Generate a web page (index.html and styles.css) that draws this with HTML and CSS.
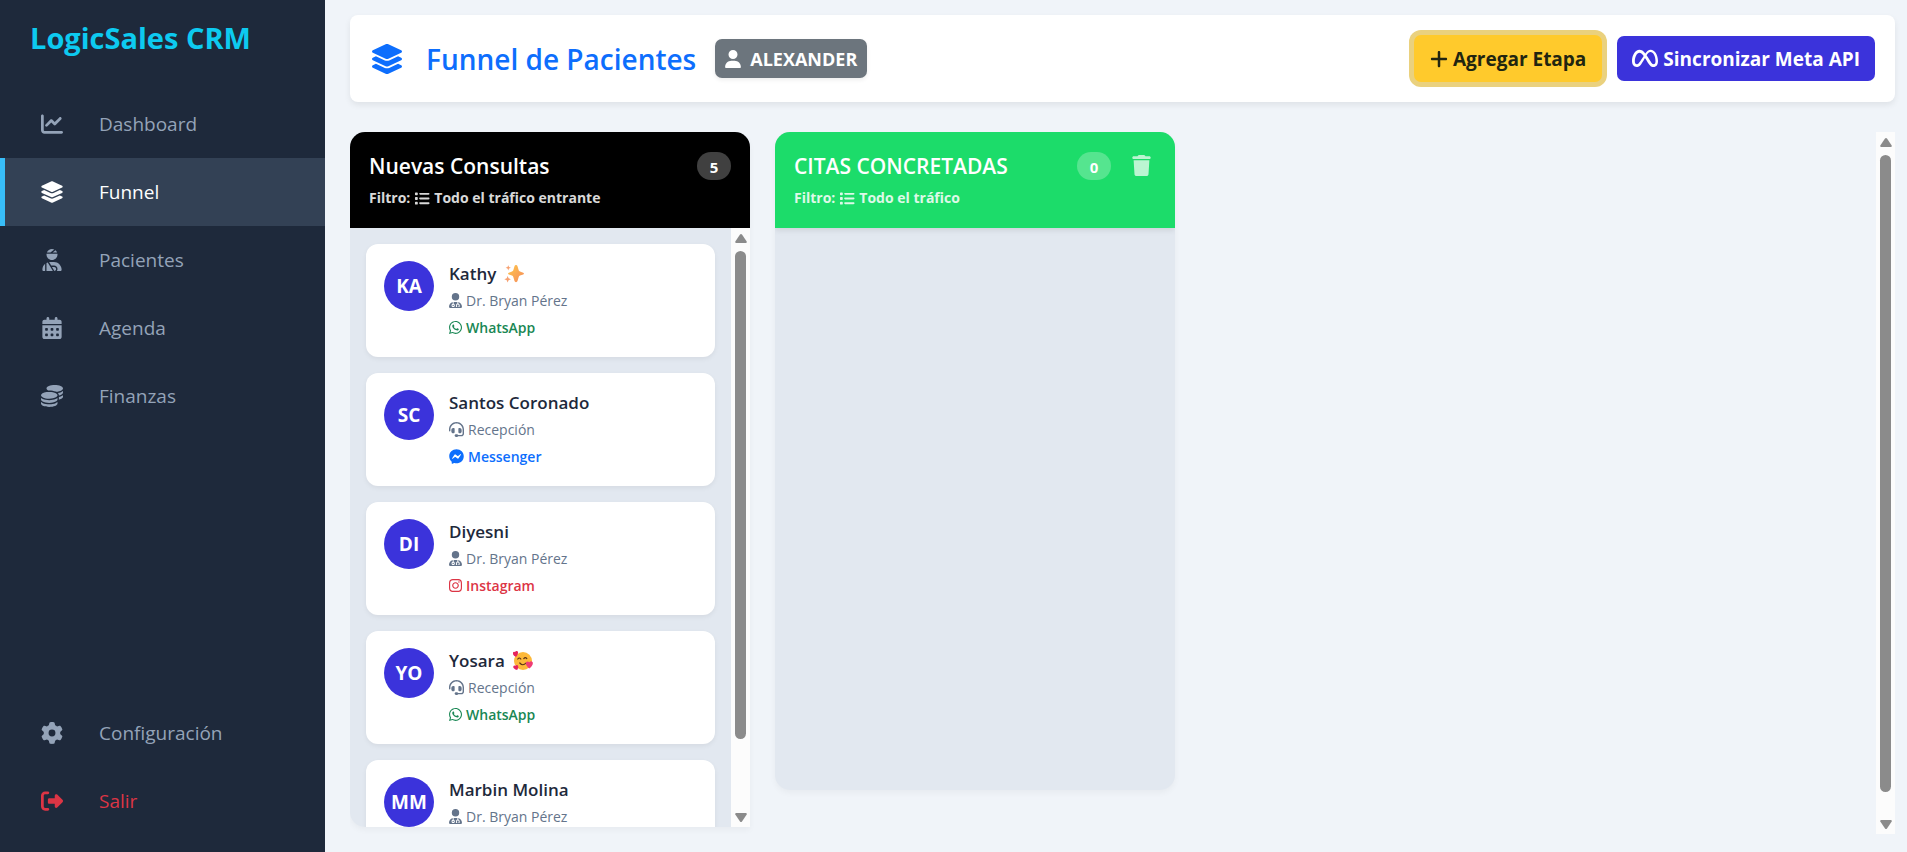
FILE: index.html
```html
<!DOCTYPE html>
<html lang="es">
<head>
<meta charset="utf-8">
<meta name="viewport" content="width=device-width, initial-scale=1">
<title>LogicSales CRM - Funnel de Pacientes</title>
<link rel="stylesheet" href="styles.css">
</head>
<body>
<!-- iconos -->
<svg class="sprite" aria-hidden="true">
	<symbol id="i-chart" viewBox="0 0 512 512"><path d="M64 64c0-17.7-14.3-32-32-32S0 46.3 0 64V400c0 44.2 35.8 80 80 80H480c17.7 0 32-14.3 32-32s-14.3-32-32-32H80c-8.8 0-16-7.2-16-16V64zm406.6 86.6c12.5-12.5 12.5-32.8 0-45.3s-32.8-12.5-45.3 0L320 210.7l-57.4-57.4c-12.5-12.5-32.8-12.5-45.3 0l-112 112c-12.5 12.5-12.5 32.8 0 45.3s32.8 12.5 45.3 0L240 221.3l57.4 57.4c12.5 12.5 32.8 12.5 45.3 0l128-128z"/></symbol>
	<symbol id="i-layers" viewBox="0 0 576 512"><path d="M264.5 5.2c14.9-6.9 32.1-6.9 47 0l218.6 101c8.5 3.9 13.9 12.4 13.9 21.8s-5.4 17.9-13.9 21.8l-218.6 101c-14.9 6.9-32.1 6.9-47 0L45.9 149.8C37.4 145.8 32 137.3 32 128s5.4-17.9 13.9-21.8L264.5 5.2zM476.9 209.6l53.2 24.6c8.5 3.9 13.9 12.4 13.9 21.8s-5.4 17.9-13.9 21.8l-218.6 101c-14.9 6.9-32.1 6.9-47 0L45.9 277.8C37.4 273.8 32 265.3 32 256s5.4-17.9 13.9-21.8l53.2-24.6 152 70.2c23.4 10.8 50.4 10.8 73.8 0l152-70.2zm-152 198.2l152-70.2 53.2 24.6c8.5 3.9 13.9 12.4 13.9 21.8s-5.4 17.9-13.9 21.8l-218.6 101c-14.9 6.9-32.1 6.9-47 0L45.9 405.8C37.4 401.8 32 393.3 32 384s5.4-17.9 13.9-21.8l53.2-24.6 152 70.2c23.4 10.8 50.4 10.8 73.8 0z"/></symbol>
	<symbol id="i-injured" viewBox="0 0 448 512"><path d="M240 80H342.7c-7.9-19.5-20.4-36.5-36.2-49.9L240 80zm37.7-68.2C261.3 4.2 243.2 0 224 0c-53.7 0-99.3 33.1-118.7 80h81.4l91-68.2zM224 256c70.7 0 128-57.3 128-128c0-5.4-.3-10.8-1-16H97c-.7 5.2-1 10.6-1 16c0 70.7 57.3 128 128 128zM124 312.4c-9.7 3.1-19.1 7-28 11.7V512H243.7L181.5 408.2 124 312.4zm33-7.2L204.3 384H272c44.2 0 80 35.8 80 80c0 18-6 34.6-16 48h82.3c16.4 0 29.7-13.3 29.7-29.7C448 383.8 368.2 304 269.7 304H178.3c-7.2 0-14.3 .4-21.3 1.3zM0 482.3C0 498.7 13.3 512 29.7 512H64V345.4C24.9 378.1 0 427.3 0 482.3zM320 464c0-26.5-21.5-48-48-48H223.5l57.1 95.2C303 507.2 320 487.6 320 464z"/></symbol>
	<symbol id="i-calendar" viewBox="0 0 448 512"><path d="M128 0c17.7 0 32 14.3 32 32V64H288V32c0-17.7 14.3-32 32-32s32 14.3 32 32V64h48c26.5 0 48 21.5 48 48v48H0V112C0 85.5 21.5 64 48 64H96V32c0-17.7 14.3-32 32-32zM0 192H448V464c0 26.5-21.5 48-48 48H48c-26.5 0-48-21.5-48-48V192zm64 80v32c0 8.8 7.2 16 16 16h32c8.8 0 16-7.2 16-16V272c0-8.8-7.2-16-16-16H80c-8.8 0-16 7.2-16 16zm128 0v32c0 8.8 7.2 16 16 16h32c8.8 0 16-7.2 16-16V272c0-8.8-7.2-16-16-16H208c-8.8 0-16 7.2-16 16zm144-16c-8.8 0-16 7.2-16 16v32c0 8.8 7.2 16 16 16h32c8.8 0 16-7.2 16-16V272c0-8.8-7.2-16-16-16H336zM64 400v32c0 8.8 7.2 16 16 16h32c8.8 0 16-7.2 16-16V400c0-8.8-7.2-16-16-16H80c-8.8 0-16 7.2-16 16zm144-16c-8.8 0-16 7.2-16 16v32c0 8.8 7.2 16 16 16h32c8.8 0 16-7.2 16-16V400c0-8.8-7.2-16-16-16H208zm112 16v32c0 8.8 7.2 16 16 16h32c8.8 0 16-7.2 16-16V400c0-8.8-7.2-16-16-16H336c-8.8 0-16 7.2-16 16z"/></symbol>
	<symbol id="i-coins" viewBox="0 0 512 512"><path d="M512 80c0 18-14.3 34.6-38.4 48c-29.1 16.1-72.5 27.5-122.3 30.9c-3.7-1.8-7.4-3.5-11.3-5C300.6 137.4 248.2 128 192 128c-8.3 0-16.4 .2-24.5 .6l-1.1-.6C142.3 114.6 128 98 128 80c0-44.2 86-80 192-80S512 35.8 512 80zM160.7 161.1c10.2-.7 20.7-1.1 31.3-1.1c62.2 0 117.4 12.3 152.5 31.4C369.3 204.9 384 221.7 384 240c0 4-.7 7.9-2.1 11.7c-4.6 13.2-17 25.3-35 35.5c-.4 .2-.9 .5-1.3 .7c-35 19.4-90.8 32-153.6 32c-59.6 0-112.9-11.3-148.2-29.1c-1.9-.9-3.7-1.9-5.5-2.9C14.3 274.6 0 258 0 240c0-34.8 53.4-64.5 128-75.4c10.5-1.5 21.4-2.7 32.7-3.5zM416 240c0-21.9-10.6-39.9-24.1-53.4c28.3-4.4 54.2-11.4 76.2-20.5c16.3-6.8 31.5-15.2 43.9-25.5V176c0 19.3-16.5 37.1-43.8 50.9c-14.6 7.4-32.4 13.7-52.4 18.5c.1-1.8 .2-3.5 .2-5.3zm-32 96c0 18-14.3 34.6-38.4 48c-1.8 1-3.6 1.9-5.5 2.9C304.9 404.7 251.6 416 192 416c-62.8 0-118.6-12.6-153.6-32C14.3 370.6 0 354 0 336V300.6c12.5 10.3 27.6 18.7 43.9 25.5C83.4 342.6 135.8 352 192 352s108.6-9.4 148.1-25.9c16.3-6.8 31.5-15.2 43.9-25.5V336zm32 0V278.1c19-4.2 36.5-9.5 52.1-16c16.3-6.8 31.5-15.2 43.9-25.5V272c0 10.5-5 21-14.9 30.9c-16.3 16.3-45 29.7-81.3 38.4c.1-1.7 .2-3.5 .2-5.3zM192 448c56.2 0 108.6-9.4 148.1-25.9c16.3-6.8 31.5-15.2 43.9-25.5V432c0 44.2-86 80-192 80S0 476.2 0 432V396.6c12.5 10.3 27.6 18.7 43.9 25.5C83.4 438.6 135.8 448 192 448z"/></symbol>
	<symbol id="i-gear" viewBox="0 0 512 512"><path d="M495.9 166.6c3.2 8.7 .5 18.4-6.4 24.6l-43.3 39.4c1.1 8.3 1.7 16.8 1.7 25.4s-.6 17.1-1.7 25.4l43.3 39.4c6.9 6.2 9.6 15.9 6.4 24.6c-4.4 11.9-9.7 23.3-15.8 34.3l-4.7 8.1c-6.6 11-14 21.4-22.1 31.2c-5.9 7.2-15.7 9.6-24.5 6.8l-55.7-17.7c-13.4 10.3-28.2 18.9-44 25.4l-12.5 57.1c-2 9.1-9 16.3-18.2 17.8c-13.8 2.3-28 3.5-42.5 3.5s-28.7-1.2-42.5-3.5c-9.2-1.5-16.2-8.7-18.2-17.8l-12.5-57.1c-15.8-6.5-30.6-15.1-44-25.4L83.1 425.9c-8.8 2.8-18.6 .3-24.5-6.8c-8.1-9.8-15.5-20.2-22.1-31.2l-4.7-8.1c-6.1-11-11.4-22.4-15.8-34.3c-3.2-8.7-.5-18.4 6.4-24.6l43.3-39.4C64.6 273.1 64 264.6 64 256s.6-17.1 1.7-25.4L22.4 191.2c-6.9-6.2-9.6-15.9-6.4-24.6c4.4-11.9 9.7-23.3 15.8-34.3l4.7-8.1c6.6-11 14-21.4 22.1-31.2c5.9-7.2 15.7-9.6 24.5-6.8l55.7 17.7c13.4-10.3 28.2-18.9 44-25.4l12.5-57.1c2-9.1 9-16.3 18.2-17.8C227.3 1.2 241.5 0 256 0s28.7 1.2 42.5 3.5c9.2 1.5 16.2 8.7 18.2 17.8l12.5 57.1c15.8 6.5 30.6 15.1 44 25.4l55.7-17.7c8.8-2.8 18.6-.3 24.5 6.8c8.1 9.8 15.5 20.2 22.1 31.2l4.7 8.1c6.1 11 11.4 22.4 15.8 34.3zM256 336a80 80 0 1 0 0-160 80 80 0 1 0 0 160z"/></symbol>
	<symbol id="i-exit" viewBox="0 0 512 512"><path d="M377.9 105.9L500.7 228.7c7.2 7.2 11.3 17.1 11.3 27.3s-4.1 20.1-11.3 27.3L377.9 406.1c-6.4 6.4-15 9.9-24 9.9c-18.7 0-33.9-15.2-33.9-33.9l0-62.1-128 0c-17.7 0-32-14.3-32-32l0-64c0-17.7 14.3-32 32-32l128 0 0-62.1c0-18.7 15.2-33.9 33.9-33.9c9 0 17.6 3.6 24 9.9zM160 96L96 96c-17.7 0-32 14.3-32 32l0 256c0 17.7 14.3 32 32 32l64 0c17.7 0 32 14.3 32 32s-14.3 32-32 32l-64 0c-53 0-96-43-96-96L0 128C0 75 43 32 96 32l64 0c17.7 0 32 14.3 32 32s-14.3 32-32 32z"/></symbol>
	<symbol id="i-user" viewBox="0 0 448 512"><path d="M224 256A128 128 0 1 0 224 0a128 128 0 1 0 0 256zm-45.7 48C79.8 304 0 383.8 0 482.3C0 498.7 13.3 512 29.7 512H418.3c16.4 0 29.7-13.3 29.7-29.7C448 383.8 368.2 304 269.7 304H178.3z"/></symbol>
	<symbol id="i-plus" viewBox="0 0 448 512"><path d="M256 80c0-17.7-14.3-32-32-32s-32 14.3-32 32V224H48c-17.7 0-32 14.3-32 32s14.3 32 32 32H192V432c0 17.7 14.3 32 32 32s32-14.3 32-32V288H400c17.7 0 32-14.3 32-32s-14.3-32-32-32H256V80z"/></symbol>
	<symbol id="i-meta" viewBox="0 0 640 512"><path d="M640 317.9C640 409.2 600.6 466.4 529.7 466.4C467.1 466.4 433.9 431.8 372.8 329.8L341.4 277.2C333.1 264.7 326.9 253 320.2 242.2C300.1 276 273.1 325.2 273.1 325.2C206.1 441.8 168.5 466.4 116.2 466.4C43.4 466.4 0 409.1 0 320.5C0 177.5 79.8 42.4 183.9 42.4C234.1 42.4 277.7 67.1 328.7 131.9C365.8 81.8 406.8 42.4 459.3 42.4C558.4 42.4 640 168.1 640 317.9zM287.4 192.2C244.5 130.1 216.5 111.7 183 111.7C121.1 111.7 69.2 217.8 69.2 321.7C69.2 370.2 87.7 397.4 118.8 397.4C149 397.4 167.8 378.4 222 293.6C222 293.6 246.7 254.5 287.4 192.2zM531.2 397.4C563.4 397.4 578.1 369.9 578.1 322.5C578.1 198.3 523.8 97.1 454.9 97.1C421.7 97.1 393.8 123 360 175.1C369.4 188.9 379.1 204.1 389.3 220.5L426.8 282.9C485.5 377 500.3 397.4 531.2 397.4z"/></symbol>
	<symbol id="i-list" viewBox="0 0 512 512"><path d="M40 48C26.7 48 16 58.7 16 72v48c0 13.3 10.7 24 24 24H88c13.3 0 24-10.7 24-24V72c0-13.3-10.7-24-24-24H40zM192 64c-17.7 0-32 14.3-32 32s14.3 32 32 32H480c17.7 0 32-14.3 32-32s-14.3-32-32-32H192zm0 160c-17.7 0-32 14.3-32 32s14.3 32 32 32H480c17.7 0 32-14.3 32-32s-14.3-32-32-32H192zm0 160c-17.7 0-32 14.3-32 32s14.3 32 32 32H480c17.7 0 32-14.3 32-32s-14.3-32-32-32H192zM16 232v48c0 13.3 10.7 24 24 24H88c13.3 0 24-10.7 24-24V232c0-13.3-10.7-24-24-24H40c-13.3 0-24 10.7-24 24zM40 368c-13.3 0-24 10.7-24 24v48c0 13.3 10.7 24 24 24H88c13.3 0 24-10.7 24-24V392c0-13.3-10.7-24-24-24H40z"/></symbol>
	<symbol id="i-trash" viewBox="0 0 448 512"><path d="M135.2 17.7L128 32H32C14.3 32 0 46.3 0 64S14.3 96 32 96H416c17.7 0 32-14.3 32-32s-14.3-32-32-32H320l-7.2-14.3C307.4 6.8 296.3 0 284.2 0H163.8c-12.1 0-23.2 6.8-28.6 17.7zM416 128H32L53.2 467c1.6 25.3 22.6 45 47.9 45H346.9c25.3 0 46.3-19.7 47.9-45L416 128z"/></symbol>
	<symbol id="i-doctor" viewBox="0 0 448 512"><path d="M224 256A128 128 0 1 0 224 0a128 128 0 1 0 0 256zm-96 55.2C54 332.9 0 401.3 0 482.3C0 498.7 13.3 512 29.7 512H418.3c16.4 0 29.7-13.3 29.7-29.7c0-81-54-149.4-128-171.1V362c27.6 7.1 48 32.2 48 62v40c0 8.8-7.2 16-16 16H336c-8.8 0-16-7.2-16-16s7.2-16 16-16V424c0-17.7-14.3-32-32-32s-32 14.3-32 32v24c8.8 0 16 7.2 16 16s-7.2 16-16 16H256c-8.8 0-16-7.2-16-16V424c0-29.8 20.4-54.9 48-62V304.9c-6-.6-12.1-.9-18.3-.9H178.3c-6.2 0-12.3 .3-18.3 .9v65.4c23.1 6.9 40 28.3 40 53.7c0 30.9-25.1 56-56 56s-56-25.1-56-56c0-25.4 16.9-46.8 40-53.7V311.2zM144 448a24 24 0 1 0 0-48 24 24 0 1 0 0 48z"/></symbol>
	<symbol id="i-headset" viewBox="0 0 512 512"><path d="M256 48C141.1 48 48 141.1 48 256v40c0 13.3-10.7 24-24 24s-24-10.7-24-24V256C0 114.6 114.6 0 256 0S512 114.6 512 256V400.1c0 48.6-39.4 88-88.1 88L313.6 488c-8.3 14.3-23.8 24-41.6 24H240c-26.5 0-48-21.5-48-48s21.5-48 48-48h32c17.8 0 33.3 9.7 41.6 24l110.4 .1c22.1 0 40-17.9 40-40V256c0-114.9-93.1-208-208-208zM144 208h16c17.7 0 32 14.3 32 32V352c0 17.7-14.3 32-32 32H144c-35.3 0-64-28.7-64-64V272c0-35.3 28.7-64 64-64zm224 0c35.3 0 64 28.7 64 64v48c0 35.3-28.7 64-64 64H352c-17.7 0-32-14.3-32-32V240c0-17.7 14.3-32 32-32h16z"/></symbol>
	<symbol id="i-whatsapp" viewBox="0 0 448 512"><path d="M380.9 97.1C339 55.1 283.2 32 223.9 32c-122.4 0-222 99.6-222 222 0 39.1 10.2 77.3 29.6 111L0 480l117.7-30.9c32.4 17.7 68.9 27 106.1 27h.1c122.3 0 224.1-99.6 224.1-222 0-59.3-25.2-115-67.1-157zm-157 341.6c-33.2 0-65.7-8.9-94-25.7l-6.7-4-69.8 18.3L72 359.2l-4.4-7c-18.5-29.4-28.2-63.3-28.2-98.2 0-101.7 82.8-184.5 184.6-184.5 49.3 0 95.6 19.2 130.4 54.1 34.8 34.9 56.2 81.2 56.1 130.5 0 101.8-84.9 184.6-186.6 184.6zm101.2-138.2c-5.5-2.8-32.8-16.2-37.9-18-5.1-1.9-8.8-2.8-12.5 2.8-3.7 5.6-14.3 18-17.6 21.8-3.2 3.7-6.5 4.2-12 1.4-32.6-16.3-54-29.1-75.5-66-5.7-9.8 5.7-9.1 16.3-30.3 1.8-3.7.9-6.9-.5-9.7-1.4-2.8-12.5-30.1-17.1-41.2-4.5-10.8-9.1-9.3-12.5-9.5-3.2-.2-6.9-.2-10.6-.2-3.7 0-9.7 1.4-14.8 6.9-5.1 5.6-19.4 19-19.4 46.3 0 27.3 19.9 53.7 22.6 57.4 2.8 3.7 39.1 59.7 94.8 83.8 35.2 15.2 49 16.5 66.6 13.9 10.7-1.6 32.8-13.4 37.4-26.4 4.6-13 4.6-24.1 3.2-26.4-1.3-2.5-5-3.9-10.5-6.6z"/></symbol>
	<symbol id="i-messenger" viewBox="0 0 512 512"><path d="M256.5 8C116.5 8 8 110.3 8 248.6c0 72.3 29.7 134.8 78.1 177.9 8.3 7.5 6.6 11.9 8 58.2A19.9 19.9 0 0 0 122 502.3c52.9-23.3 53.6-25.1 62.6-22.7C337.9 521.8 504 423.7 504 248.6 504 110.3 396.6 8 256.5 8zm149.3 185.1l-73 115.6a37.4 37.4 0 0 1-53.9 9.9l-58.1-43.5a15 15 0 0 0-18 0l-78.4 59.4c-10.5 7.9-24.2-4.6-17.1-15.7l73-115.6a37.4 37.4 0 0 1 53.9-9.9l58.1 43.5a15 15 0 0 0 18 0l78.4-59.4c10.4-8 24.1 4.5 17.1 15.6z"/></symbol>
	<symbol id="i-instagram" viewBox="0 0 448 512"><path d="M224.1 141c-63.6 0-114.9 51.3-114.9 114.9s51.3 114.9 114.9 114.9S339 319.5 339 255.9 287.7 141 224.1 141zm0 189.6c-41.1 0-74.7-33.5-74.7-74.7s33.5-74.7 74.7-74.7 74.7 33.5 74.7 74.7-33.6 74.7-74.7 74.7zm146.4-194.3c0 14.9-12 26.8-26.8 26.8-14.9 0-26.8-12-26.8-26.8s12-26.8 26.8-26.8 26.8 12 26.8 26.8zm76.1 27.2c-1.7-35.9-9.9-67.7-36.2-93.9-26.2-26.2-58-34.4-93.9-36.2-37-2.1-147.9-2.1-184.9 0-35.8 1.7-67.6 9.9-93.9 36.1s-34.4 58-36.2 93.9c-2.1 37-2.1 147.9 0 184.9 1.7 35.9 9.9 67.7 36.2 93.9s58 34.4 93.9 36.2c37 2.1 147.9 2.1 184.9 0 35.9-1.7 67.7-9.9 93.9-36.2 26.2-26.2 34.4-58 36.2-93.9 2.1-37 2.1-147.8 0-184.8zM398.8 388c-7.8 19.6-22.9 34.7-42.6 42.6-29.5 11.7-99.5 9-132.1 9s-102.7 2.6-132.1-9c-19.6-7.8-34.7-22.9-42.6-42.6-11.7-29.5-9-99.5-9-132.1s-2.6-102.7 9-132.1c7.8-19.6 22.9-34.7 42.6-42.6 29.5-11.7 99.5-9 132.1-9s102.7-2.6 132.1 9c19.6 7.8 34.7 22.9 42.6 42.6 11.7 29.5 9 99.5 9 132.1s2.7 102.7-9 132.1z"/></symbol>
	<symbol id="i-arrow" viewBox="0 0 12 9"><path d="M5 .6Q6-.4 7 .6L11.7 7.4Q12 9 11 9H1Q0 9 .3 7.4z"/></symbol>
</svg>

<div class="app">
	<aside class="sidebar">
		<div class="brand">LogicSales CRM</div>
		<nav class="menu">
			<a href="#"><svg class="icon"><use href="#i-chart"/></svg>Dashboard</a>
			<a href="#" class="active"><svg class="icon"><use href="#i-layers"/></svg>Funnel</a>
			<a href="#"><svg class="icon"><use href="#i-injured"/></svg>Pacientes</a>
			<a href="#"><svg class="icon"><use href="#i-calendar"/></svg>Agenda</a>
			<a href="#"><svg class="icon"><use href="#i-coins"/></svg>Finanzas</a>
		</nav>
		<nav class="menu menu-bottom">
			<a href="#"><svg class="icon"><use href="#i-gear"/></svg>Configuración</a>
			<a href="#" class="exit"><svg class="icon"><use href="#i-exit"/></svg>Salir</a>
		</nav>
	</aside>

	<main class="main">
		<header class="topbar">
			<svg class="title-icon"><use href="#i-layers"/></svg>
			<h1>Funnel de Pacientes</h1>
			<span class="user"><svg><use href="#i-user"/></svg>ALEXANDER</span>
			<div class="actions">
				<button type="button" class="btn btn-add"><svg><use href="#i-plus"/></svg>Agregar Etapa</button>
				<button type="button" class="btn btn-sync"><svg><use href="#i-meta"/></svg>Sincronizar Meta API</button>
			</div>
		</header>

		<div class="board">
			<div class="columns">
				<section class="column">
					<div class="column-head black">
						<div class="column-title">
							<h2>Nuevas Consultas</h2>
							<span class="count">5</span>
						</div>
						<div class="filter">Filtro: <svg><use href="#i-list"/></svg> Todo el tráfico entrante</div>
					</div>
					<div class="column-body">
						<div class="cards">
							<article class="card">
								<div class="avatar">KA</div>
								<div class="info">
									<h3>Kathy
										<svg class="emoji" viewBox="0 0 20 20" role="img" aria-label="✨">
											<defs><linearGradient id="spark" x1="0" y1="0" x2="1" y2="1"><stop offset="0" stop-color="#ffc84a"/><stop offset="1" stop-color="#f58a5c"/></linearGradient></defs>
											<path fill="url(#spark)" d="M12 1q1.2 0 1.5 1.2l1.2 4q.3 1 1.3 1.3l3.2 1.2q1.6.8 0 1.7l-3.2 1.2q-1 .3-1.3 1.3l-1.2 4.2q-.3 1.1-1.5 1.1t-1.5-1.1l-1.2-4.2q-.3-1-1.3-1.3l-3.2-1.2q-1.6-.9 0-1.7L8 7.5q1-.3 1.3-1.3l1.2-4Q10.8 1 12 1z"/>
											<path fill="#f7a070" d="M4.3 1.2l.7 1.9 1.9.7L5 4.6l-.7 1.9-.8-1.9-1.9-.8 1.9-.7zM3.6 12l1 2.3 2.3.9-2.3 1-1 2.3-.9-2.3-2.3-1 2.3-.9z"/>
										</svg>
									</h3>
									<p class="owner"><svg><use href="#i-doctor"/></svg>Dr. Bryan Pérez</p>
									<p class="source whatsapp"><svg><use href="#i-whatsapp"/></svg>WhatsApp</p>
								</div>
							</article>
							<article class="card">
								<div class="avatar">SC</div>
								<div class="info">
									<h3>Santos Coronado</h3>
									<p class="owner wide"><svg><use href="#i-headset"/></svg>Recepción</p>
									<p class="source messenger wide"><svg><use href="#i-messenger"/></svg>Messenger</p>
								</div>
							</article>
							<article class="card">
								<div class="avatar">DI</div>
								<div class="info">
									<h3>Diyesni</h3>
									<p class="owner"><svg><use href="#i-doctor"/></svg>Dr. Bryan Pérez</p>
									<p class="source instagram"><svg><use href="#i-instagram"/></svg>Instagram</p>
								</div>
							</article>
							<article class="card">
								<div class="avatar">YO</div>
								<div class="info">
									<h3>Yosara
										<svg class="emoji" viewBox="0 0 20 20" role="img" aria-label="🥰">
											<circle cx="10" cy="10" r="9" fill="#fdb93a"/>
											<path fill="none" stroke="#5b3318" stroke-width="1.2" stroke-linecap="round" d="M4.8 8q1.4-2 3 0M10.8 7.6q1.5-2 3 0M6.8 12q3 3.4 6.2.2"/>
											<path fill="#e5245e" d="M3 6Q-.6 4-.1 1.7.4.2 2 .9 3.4-.7 4.8.5 5.9 2.5 3 6z"/>
											<path fill="#e5245e" d="M4.2 19Q.1 17.8.2 15.7q.6-1.6 2.2-.9 1.3-1.5 2.6-.3 1.1 1.7-.8 4.5z"/>
											<path fill="#ef3c74" d="M16.3 17.5Q12.2 14 13 11.6q1.2-1.8 3.3-.4 1.8-1.8 3.4 0 .9 2.6-3.4 6.3z"/>
										</svg>
									</h3>
									<p class="owner wide"><svg><use href="#i-headset"/></svg>Recepción</p>
									<p class="source whatsapp"><svg><use href="#i-whatsapp"/></svg>WhatsApp</p>
								</div>
							</article>
							<article class="card">
								<div class="avatar">MM</div>
								<div class="info">
									<h3>Marbin Molina</h3>
									<p class="owner"><svg><use href="#i-doctor"/></svg>Dr. Bryan Pérez</p>
								</div>
							</article>
						</div>
						<div class="scroll" aria-hidden="true">
							<svg><use href="#i-arrow"/></svg>
							<div class="track"><div class="thumb thumb-cards"></div></div>
							<svg class="down"><use href="#i-arrow"/></svg>
						</div>
					</div>
				</section>

				<section class="column column-short">
					<div class="column-head green">
						<div class="column-title">
							<h2>CITAS CONCRETADAS</h2>
							<span class="count">0</span>
							<button type="button" class="remove" aria-label="Eliminar etapa"><svg><use href="#i-trash"/></svg></button>
						</div>
						<div class="filter">Filtro: <svg><use href="#i-list"/></svg> Todo el tráfico</div>
					</div>
					<div class="column-body"></div>
				</section>
			</div>
			<div class="scroll" aria-hidden="true">
				<svg><use href="#i-arrow"/></svg>
				<div class="track"><div class="thumb thumb-board"></div></div>
				<svg class="down"><use href="#i-arrow"/></svg>
			</div>
		</div>
	</main>
</div>
</body>
</html>
```
FILE: styles.css
```css
*{ box-sizing:border-box; }
body{ margin:0; background:#f0f4f9; color:#1e293b; font-family:"Segoe UI", "Open Sans", sans-serif; font-size:14px; }
h1, h2, h3, p{ margin:0; }
svg{ fill:currentColor; flex:none; }
button{ font-family:inherit; cursor:pointer; }
.sprite{ display:none; }

.app{ display:flex; height:100vh; }

/* menu lateral */
.sidebar{ width:325px; flex:none; display:flex; flex-direction:column; padding-bottom:17px; background:#1e293b; }
.brand{ padding:18px 30px 0; height:90px; color:#0dcaf0; font-size:29px; line-height:40px; font-weight:700; }
.menu a{ display:flex; align-items:center; height:68px; padding-left:35px; border-left:5px solid transparent; color:#94a3b8; font-size:19px; text-decoration:none; }
.menu a.active{ background:#334155; border-left-color:#38bdf8; color:#fff; }
.menu a.exit{ color:#dc3545; }
.menu .icon{ width:24px; height:22px; margin-right:35px; }
.menu-bottom{ margin-top:auto; }

/* contenido */
.main{ flex:1; min-width:0; display:flex; flex-direction:column; padding:15px 12px 18px 25px; }
.topbar{ display:flex; align-items:center; height:87px; flex:none; padding:0 20px; background:#fff; border-radius:8px; box-shadow:0 3px 6px rgba(0,0,0,.075); }
.title-icon{ width:34px; height:30px; color:#0d6efd; }
.topbar h1{ margin-left:22px; color:#0d6efd; font-size:28px; font-weight:600; line-height:34px; }
.user{ display:flex; align-items:center; gap:9px; height:39px; margin-left:19px; padding:0 10px; background:#6c757d; border-radius:7px; color:#fff; font-size:18px; font-weight:700; box-shadow:0 2px 4px rgba(0,0,0,.075); }
.user svg{ width:16px; height:18px; }
.actions{ display:flex; align-items:center; gap:15px; margin-left:auto; }
.btn{ display:flex; align-items:center; gap:5px; height:45px; padding:0 15px; border:0; border-radius:7px; font-size:19px; font-weight:700; }
.btn-add{ height:47px; padding:0 16px; background:#ffca2c; color:#212510; box-shadow:0 0 0 5px #ead17e; }
.btn-add svg{ width:18px; height:20px; }
.btn-sync{ background:#3b33db; color:#fff; }
.btn-sync svg{ width:26px; height:21px; }

/* tablero */
.board{ flex:1; min-height:0; display:flex; margin-top:30px; }
.columns{ flex:1; min-width:0; display:flex; gap:25px; padding-bottom:7px; overflow:hidden; }
.column{ width:400px; flex:none; display:flex; flex-direction:column; background:#e2e8f0; border-radius:15px 15px 0 15px; overflow:hidden; box-shadow:0 3px 6px rgba(0,0,0,.04); }
.column-short{ margin-bottom:37px; border-radius:15px; }
.column-head{ height:96px; flex:none; padding:19px 19px 0; color:#fff; }
.black{ background:#000; }
.green{ background:#1cdc6a; box-shadow:0 2px 6px rgba(0,0,0,.1); }
.column-title{ display:flex; align-items:center; height:29px; }
.column h2{ flex:1; font-size:21px; font-weight:600; line-height:28px; }
.count{ height:28px; min-width:34px; padding:0 12px; border-radius:14px; background:rgba(255,255,255,.25); font-size:15px; font-weight:700; line-height:30px; text-align:center; }
.remove{ margin:0 5px 0 21px; padding:0; width:19px; height:21px; border:0; background:none; color:rgba(255,255,255,.7); }
.remove svg{ display:block; width:19px; height:21px; }
.filter{ display:flex; align-items:center; gap:4px; margin-top:6px; line-height:24px; font-size:14px; font-weight:700; opacity:.85; }
.filter svg{ width:16px; height:15px; }

.column-body{ flex:1; min-height:0; display:flex; }
.cards{ flex:1; padding:16px; overflow:hidden; }
.card{ display:flex; gap:15px; height:113px; margin-bottom:16px; padding:17px 18px; background:#fff; border-radius:12px; box-shadow:0 2px 5px rgba(0,0,0,.06); }
.avatar{ width:50px; height:50px; flex:none; border-radius:50%; background:#3b33db; color:#fff; font-size:19px; font-weight:700; line-height:51px; text-align:center; }
.info h3{ display:flex; align-items:center; gap:8px; font-size:17px; font-weight:600; line-height:26px; }
.emoji{ width:20px; height:20px; }
.info p{ display:flex; align-items:center; gap:4px; font-size:14px; line-height:27px; }
.info p svg{ width:13px; height:15px; }
.info p.wide svg{ width:15px; }
.owner{ color:#64748b; }
.source{ font-weight:600; }
.whatsapp{ color:#198754; }
.messenger{ color:#0d6efd; }
.instagram{ color:#dc3545; }

/* barras de desplazamiento */
.scroll{ width:19px; flex:none; display:flex; flex-direction:column; align-items:center; padding:6px 0 5px; background:#fcfcfc; color:#8b8b8b; }
.scroll svg{ width:12px; height:9px; }
.scroll .down{ transform:rotate(180deg); }
.track{ flex:1; padding:8px 0; }
.thumb{ width:11px; border-radius:6px; background:#8b8b8b; }
.thumb-cards{ height:88%; }
.thumb-board{ height:97%; }
```
